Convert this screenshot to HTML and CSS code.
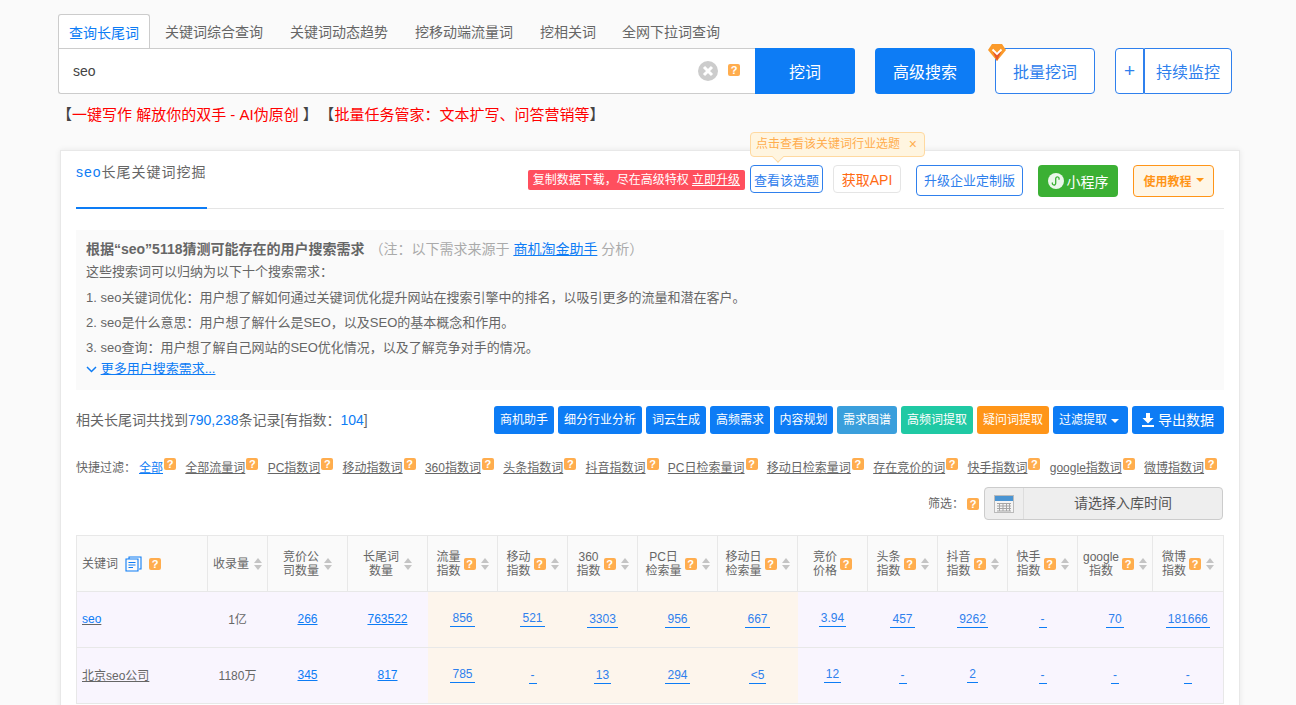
FILE: index.html
```html
<!DOCTYPE html>
<html lang="zh-CN">
<head>
    <meta charset="UTF-8">
    <meta name="viewport" content="width=device-width, initial-scale=1.0">
    <title>seo长尾关键词挖掘</title>
    <link rel="stylesheet" href="styles.css">
</head>
<body>
    <div class="search-area">
        <div class="tabs">
            <a class="tab active">查询长尾词</a>
            <a class="tab">关键词综合查询</a>
            <a class="tab">关键词动态趋势</a>
            <a class="tab">挖移动端流量词</a>
            <a class="tab">挖相关词</a>
            <a class="tab">全网下拉词查询</a>
        </div>
        <div class="search-row">
            <div class="search-box">
                <span class="search-text">seo</span>
                <svg class="clear-icon" width="20" height="20" viewBox="0 0 20 20"><circle cx="10" cy="10" r="10" fill="#ccc"/><path d="M6 6l8 8M14 6l-8 8" stroke="#fff" stroke-width="3"/></svg>
                <i class="q">?</i>
            </div>
            <button class="btn-main">挖词</button>
            <button class="btn-main btn-adv">高级搜索</button>
            <div class="batch-wrap">
                <svg class="diamond" width="18" height="18" viewBox="0 0 18 18"><path d="M4 1h10l4 6-9 11L0 7z" fill="#fb9a2a"/><path d="M9 18L5 9h8z" fill="#e8562a"/><path d="M4.500 6.500L9 11l4.500-4.500" fill="none" stroke="#fff" stroke-width="1.800"/></svg>
                <button class="btn-line">批量挖词</button>
            </div>
            <div class="monitor">
                <button class="btn-line plus">+</button>
                <button class="btn-line watch">持续监控</button>
            </div>
        </div>
        <div class="promo">【<span>一键写作 解放你的双手 - AI伪原创</span> 】<b class="promo-next">【<span>批量任务管家&#65306;文本扩写、问答营销等</span>】</b></div>
    </div>

    <div class="card">
        <div class="card-head">
            <div class="card-title"><b>seo</b>长尾关键词挖掘</div>
            <div class="actions">
                <span class="red-tag">复制数据下载&#65292;尽在高级特权 <u>立即升级</u></span>
                <div class="topic-wrap">
                    <div class="tip">点击查看该关键词行业选题<em>×</em></div>
                    <a class="act act-topic">查看该选题</a>
                </div>
                <a class="act act-api">获取API</a>
                <a class="act act-custom">升级企业定制版</a>
                <a class="act act-mini">
                    <svg width="16" height="16" viewBox="0 0 16 16"><circle cx="8" cy="8" r="8" fill="#fff" opacity=".9"/><path d="M4.500 9.500a1.700 1.700 0 1 0 3.200 .8V5.700a1.700 1.700 0 1 1 3 1" fill="none" stroke="#3bb034" stroke-width="1.300"/></svg>
                    小程序
                </a>
                <a class="act act-help">使用教程<i class="caret"></i></a>
            </div>
        </div>

        <div class="needs">
            <p class="needs-head"><b>根据“seo”5118猜测可能存在的用户搜索需求</b><span class="note">&#65288;注&#65306;以下需求来源于 <a>商机淘金助手</a> 分析&#65289;</span></p>
            <p class="needs-sub">这些搜索词可以归纳为以下十个搜索需求&#65306;</p>
            <p>1. seo关键词优化&#65306;用户想了解如何通过关键词优化提升网站在搜索引擎中的排名&#65292;以吸引更多的流量和潜在客户。</p>
            <p>2. seo是什么意思&#65306;用户想了解什么是SEO&#65292;以及SEO的基本概念和作用。</p>
            <p>3. seo查询&#65306;用户想了解自己网站的SEO优化情况&#65292;以及了解竞争对手的情况。</p>
            <p class="needs-more">
                <svg width="11" height="7" viewBox="0 0 11 7"><path d="M1 1l4.500 4.500L10 1" fill="none" stroke="#0d7cf5" stroke-width="1.500"/></svg>
                <a>更多用户搜索需求...</a>
            </p>
        </div>

        <div class="stat-row">
            <div class="stat">相关长尾词共找到<span>790,238</span>条记录[有指数&#65306;<span>104</span>]</div>
            <div class="tools">
                <a class="tool">商机助手</a>
                <a class="tool">细分行业分析</a>
                <a class="tool">词云生成</a>
                <a class="tool">高频需求</a>
                <a class="tool tool-plan">内容规划</a>
                <a class="tool tool-sky">需求图谱</a>
                <a class="tool tool-green">高频词提取</a>
                <a class="tool tool-orange">疑问词提取</a>
                <a class="tool tool-filter">过滤提取<i class="caret"></i></a>
                <a class="tool tool-export">
                    <svg width="14" height="14" viewBox="0 0 14 14"><path d="M5 0h4v5h3.500L7 10.500 1.500 5H5zM1 12h12v2H1z" fill="#fff"/></svg>
                    导出数据
                </a>
            </div>
        </div>

        <div class="quick">
            <span class="quick-label">快捷过滤&#65306;</span>
            <a class="on">全部</a><i class="q">?</i>
            <a>全部流量词</a><i class="q">?</i>
            <a>PC指数词</a><i class="q">?</i>
            <a>移动指数词</a><i class="q">?</i>
            <a>360指数词</a><i class="q">?</i>
            <a>头条指数词</a><i class="q">?</i>
            <a>抖音指数词</a><i class="q">?</i>
            <a>PC日检索量词</a><i class="q">?</i>
            <a>移动日检索量词</a><i class="q">?</i>
            <a>存在竞价的词</a><i class="q">?</i>
            <a>快手指数词</a><i class="q">?</i>
            <a>google指数词</a><i class="q">?</i>
            <a>微博指数词</a><i class="q">?</i>
        </div>

        <div class="date-row">
            <span class="date-label">筛选&#65306;</span>
            <i class="q">?</i>
            <div class="date-box">
                <div class="date-icon">
                    <svg width="20" height="18" viewBox="0 0 20 18"><rect x=".5" y=".5" width="19" height="17" fill="#f4f4f4" stroke="#bbb"/><rect x="1" y="1" width="18" height="5" fill="#4a94d2"/><path d="M3 8.500h14M3 11h14M3 13.500h14M3 16h14M5.500 8v8M9 8v8M12.500 8v8M15.500 8v8" stroke="#a5a5a5"/></svg>
                </div>
                <div class="date-text">请选择入库时间</div>
            </div>
        </div>

        <table class="words">
            <colgroup>
                <col class="c131"><col class="c60"><col class="c80"><col class="c80"><col class="c70"><col class="c70"><col class="c70"><col class="c80"><col class="c80"><col class="c70"><col class="c70"><col class="c70"><col class="c70"><col class="c75"><col class="c71">
            </colgroup>
            <thead>
                <tr>
                    <th class="th-key">
                        <div class="th-left">关键词
                            <svg class="doc" width="17" height="16" viewBox="0 0 17 16"><path d="M4 2.500V1h12v12h-2M1 3h12v12H1zM3.500 6.500h7M3.500 9h7M3.500 11.500h4.500" fill="none" stroke="#0d7cf5" stroke-width="1.100"/></svg>
                            <i class="q">?</i>
                        </div>
                    </th>
                    <th><div class="th">收录量<i class="sort"></i></div></th>
                    <th><div class="th">竞价公<br>司数量<i class="sort"></i></div></th>
                    <th><div class="th"><span class="mid">长尾词<br>数量</span><i class="sort"></i></div></th>
                    <th><div class="th">流量<br>指数<i class="q">?</i><i class="sort"></i></div></th>
                    <th><div class="th">移动<br>指数<i class="q">?</i><i class="sort"></i></div></th>
                    <th><div class="th"><span class="mid">360<br>指数</span><i class="q">?</i><i class="sort"></i></div></th>
                    <th><div class="th"><span class="mid">PC日<br>检索量</span><i class="q">?</i><i class="sort"></i></div></th>
                    <th><div class="th">移动日<br>检索量<i class="q">?</i><i class="sort"></i></div></th>
                    <th><div class="th">竞价<br>价格<i class="q">?</i></div></th>
                    <th><div class="th">头条<br>指数<i class="q">?</i><i class="sort"></i></div></th>
                    <th><div class="th">抖音<br>指数<i class="q">?</i><i class="sort"></i></div></th>
                    <th><div class="th">快手<br>指数<i class="q">?</i><i class="sort"></i></div></th>
                    <th><div class="th"><span class="mid">google<br>指数</span><i class="q">?</i><i class="sort"></i></div></th>
                    <th><div class="th">微博<br>指数<i class="q">?</i><i class="sort"></i></div></th>
                </tr>
            </thead>
            <tbody>
                <tr>
                    <td class="key"><a class="word blue">seo</a></td>
                    <td>1亿</td>
                    <td><a class="lnk">266</a></td>
                    <td><a class="lnk">763522</a></td>
                    <td class="warm"><a class="idx up">856</a></td>
                    <td class="warm"><a class="idx up">521</a></td>
                    <td class="warm"><a class="idx">3303</a></td>
                    <td class="warm"><a class="idx">956</a></td>
                    <td class="warm"><a class="idx">667</a></td>
                    <td><a class="idx up">3.94</a></td>
                    <td><a class="idx">457</a></td>
                    <td><a class="idx">9262</a></td>
                    <td><a class="idx">-</a></td>
                    <td><a class="idx">70</a></td>
                    <td><a class="idx">181666</a></td>
                </tr>
                <tr>
                    <td class="key"><a class="word">北京seo公司</a></td>
                    <td>1180万</td>
                    <td><a class="lnk">345</a></td>
                    <td><a class="lnk">817</a></td>
                    <td class="warm"><a class="idx up">785</a></td>
                    <td class="warm"><a class="idx">-</a></td>
                    <td class="warm"><a class="idx">13</a></td>
                    <td class="warm"><a class="idx">294</a></td>
                    <td class="warm"><a class="idx">&lt;5</a></td>
                    <td><a class="idx up">12</a></td>
                    <td><a class="idx">-</a></td>
                    <td><a class="idx up">2</a></td>
                    <td><a class="idx">-</a></td>
                    <td><a class="idx">-</a></td>
                    <td><a class="idx">-</a></td>
                </tr>
            </tbody>
        </table>
    </div>
</body>
</html>
```

FILE: styles.css
```css
* {
    margin: 0;
    padding: 0;
    box-sizing: border-box;
}

html, body {
    height: 705px;
    overflow: hidden;
}

body {
    font-family: "Liberation Sans", "Noto Sans CJK SC", sans-serif;
    font-size: 12px;
    color: #666;
    background-color: #fafafa;
}

i, em {
    font-style: normal;
}

button {
    font-family: inherit;
    cursor: pointer;
}

.q {
    display: inline-block;
    flex: none;
    width: 12px;
    height: 12px;
    border-radius: 2px;
    background-color: #ffad4e;
    color: #fff;
    font-size: 11px;
    font-weight: bold;
    line-height: 12px;
    text-align: center;
}

.caret {
    display: inline-block;
    margin-left: 4px;
    border-top: 4px solid currentColor;
    border-left: 4px solid transparent;
    border-right: 4px solid transparent;
    vertical-align: middle;
}

/* search */
.search-area {
    padding: 14px 0 0 58px;
}

.tabs {
    display: flex;
    width: 697px;
    height: 35px;
    border-bottom: 1px solid #ccc;
}

.tab {
    height: 34px;
    margin-left: 1px;
    padding: 0 13px;
    font-size: 14px;
    line-height: 36px;
    color: #666;
}

.tab.active {
    height: 35px;
    width: 92px;
    margin: 0 1px 0 0;
    padding: 0 10px;
    border: 1px solid #ccc;
    border-bottom: none;
    border-radius: 3px 3px 0 0;
    background-color: #fff;
    color: #0d7cf5;
}

.tab:last-child {
    margin-left: 0;
}

.search-row {
    display: flex;
    height: 46px;
    margin-top: -1px;
}

.search-box {
    display: flex;
    align-items: center;
    width: 697px;
    padding: 0 15px 0 14px;
    border: 1px solid #ccc;
    border-right: none;
    border-radius: 0 0 0 3px;
    background-color: #fff;
}

.search-text {
    flex: 1;
    font-size: 14px;
    color: #444;
}

.clear-icon {
    margin-right: 10px;
}

.search-box .q {
    margin-bottom: 3px;
}

.btn-main {
    width: 100px;
    border: none;
    border-radius: 0 3px 3px 0;
    background-color: #0d7cf5;
    color: #fff;
    font-size: 16px;
}

.btn-adv {
    margin-left: 20px;
    border-radius: 4px;
}

.batch-wrap {
    position: relative;
    margin-left: 20px;
}

.diamond {
    position: absolute;
    left: -7px;
    top: -5px;
}

.btn-line {
    height: 46px;
    width: 100px;
    border: 1px solid #2f80ed;
    border-radius: 4px;
    background-color: #fff;
    color: #2f80ed;
    font-size: 16px;
}

.monitor {
    display: flex;
    margin-left: 20px;
}

.plus {
    width: 29px;
    border-radius: 4px 0 0 4px;
    font-size: 19px;
}

.watch {
    width: 88px;
    border-radius: 0 4px 4px 0;
}

.promo {
    margin: 11px 0 0 -1px;
    font-size: 15px;
    line-height: 20px;
    color: #444;
    white-space: pre;
}

.promo span {
    color: #f00;
}

.promo-next {
    margin-left: 9px;
    font-weight: normal;
}

/* card */
.card {
    width: 1180px;
    height: 600px;
    margin: 25px 0 0 60px;
    padding: 0 15px;
    border: 1px solid #e8e8e8;
    background-color: #fff;
    box-shadow: 0 0 6px rgba(0,0,0,0.08);
}

.card-head {
    display: flex;
    justify-content: space-between;
    height: 58px;
    border-bottom: 1px solid #e5e5e5;
}

.card-title {
    width: 131px;
    height: 58px;
    padding-top: 12px;
    border-bottom: 2px solid #0d7cf5;
    font-size: 14px;
    line-height: 18px;
    letter-spacing: 1px;
    white-space: nowrap;
}

.card-title b {
    font-weight: normal;
    color: #0d7cf5;
}

.actions {
    display: flex;
    align-items: flex-start;
    padding: 14px 10px 0 0;
}

.red-tag {
    height: 20px;
    margin-top: 5px;
    padding: 0 5px;
    border-radius: 2px;
    background-color: #ff4f5e;
    color: #fff;
    font-size: 12px;
    line-height: 20px;
    white-space: nowrap;
}

.topic-wrap {
    position: relative;
    margin-left: 5px;
}

.tip {
    position: absolute;
    left: 0;
    top: -33px;
    display: flex;
    justify-content: space-between;
    width: 175px;
    height: 25px;
    padding: 0 7px 0 5px;
    border: 1px solid #ffd9a0;
    border-radius: 4px;
    background-color: #fff5e0;
    color: #ffad4e;
    font-size: 12px;
    line-height: 23px;
    white-space: nowrap;
}

.tip em {
    font-size: 14px;
}

.tip::after {
    content: "";
    position: absolute;
    left: 22px;
    bottom: -6px;
    width: 9px;
    height: 9px;
    border-right: 1px solid #ffd9a0;
    border-bottom: 1px solid #ffd9a0;
    background-color: #fff5e0;
    transform: rotate(45deg) scale(.8);
}

.act {
    display: flex;
    align-items: center;
    justify-content: center;
    height: 28px;
    font-size: 13px;
    border-radius: 4px;
    white-space: nowrap;
}

.act-topic {
    width: 73px;
    border: 1px solid #2f80ed;
    color: #2f80ed;
}

.act-api {
    width: 68px;
    margin-left: 10px;
    border: 1px solid #e5e5e5;
    color: #ff6a13;
    font-size: 14px;
}

.act-custom {
    width: 107px;
    height: 31px;
    margin-left: 15px;
    padding-bottom: 2px;
    border: 1px solid #2f80ed;
    color: #2f80ed;
}

.act-mini {
    gap: 3px;
    width: 80px;
    height: 32px;
    margin-left: 15px;
    padding-bottom: 1px;
    background-color: #3bb034;
    color: #fff;
    font-size: 14px;
}

.act-help {
    width: 81px;
    height: 32px;
    margin-left: 15px;
    padding-bottom: 2px;
    border: 1px solid #ff9518;
    background-color: #fff6e6;
    color: #ff9518;
    font-size: 12px;
    font-weight: bold;
}

/* needs */
.needs {
    height: 160px;
    margin-top: 21px;
    padding: 8px 10px 0;
    background-color: #fafafa;
    font-size: 13px;
    line-height: 25px;
}

.needs-head {
    font-size: 14px;
    line-height: 23px;
}

.needs-sub {
    height: 24px;
    line-height: 22px;
}

.needs-head b {
    margin-right: 5px;
    color: #666;
}

.note {
    color: #aaa;
}

.needs a {
    color: #0d7cf5;
    text-decoration: underline;
}

.needs-more {
    line-height: 18px;
}

/* results */
.stat-row {
    display: flex;
    justify-content: space-between;
    align-items: center;
    height: 28px;
    margin-top: 16px;
}

.stat {
    padding-bottom: 3px;
    font-size: 14px;
    white-space: nowrap;
}

.stat span {
    color: #0d7cf5;
}

.tools {
    display: flex;
    gap: 4px;
}

.tool {
    height: 28px;
    padding: 0 6px;
    border-radius: 3px;
    background-color: #0d7cf5;
    color: #fff;
    line-height: 28px;
    white-space: nowrap;
}

.tool-plan {
    padding: 0 5.500px;
}

.tool-sky {
    background-color: #3a9fdc;
}

.tool-green {
    background-color: #20c9a4;
}

.tool-orange {
    background-color: #ff9518;
}

.tool-filter {
    width: 75px;
}

.tool-export {
    display: flex;
    align-items: center;
    gap: 3px;
    width: 92px;
    padding: 0 9px;
    font-size: 14px;
}

.quick {
    display: flex;
    align-items: center;
    height: 20px;
    margin-top: 22px;
    white-space: nowrap;
}

.quick-label {
    flex: none;
    width: 63px;
}

.quick a {
    color: #666;
    text-decoration: underline;
}

.quick a.on {
    color: #0d7cf5;
}

.quick .q {
    margin: 0 9.300px 4px 1px;
}

.date-row {
    display: flex;
    justify-content: flex-end;
    align-items: center;
    height: 33px;
    margin-top: 11px;
    padding-right: 1px;
}

.date-label {
    padding-bottom: 3px;
}

.date-row .q {
    margin: 0 5px 0 3px;
}

.date-box {
    display: flex;
    width: 239px;
    height: 33px;
    border: 1px solid #ccc;
    border-radius: 4px;
    background-color: #eee;
}

.date-icon {
    display: flex;
    align-items: center;
    justify-content: center;
    width: 39px;
    border-right: 1px solid #ddd;
}

.date-text {
    flex: 1;
    font-size: 14px;
    line-height: 31px;
    text-align: center;
    color: #555;
}

/* table */
.words {
    width: 1148px;
    margin-top: 15px;
    table-layout: fixed;
    border-collapse: collapse;
    background-color: #f9f5fe;
}

.c131 { width: 131px; }
.c60 { width: 60px; }
.c80 { width: 80px; }
.c70 { width: 70px; }
.c71 { width: 71px; }
.c75 { width: 75px; }

.words th {
    height: 56px;
    border: 1px solid #e8e8e8;
    background-color: #fafafa;
    font-weight: normal;
    line-height: 14px;
}

.th {
    display: flex;
    align-items: center;
    justify-content: center;
    text-align: left;
    white-space: nowrap;
}

.th-left {
    display: flex;
    align-items: center;
    padding-left: 5px;
}

.mid {
    text-align: center;
}

.doc {
    margin: 0 7px;
}

.th .q {
    margin-left: 3px;
}

.sort {
    flex: none;
    position: relative;
    width: 8px;
    height: 12px;
    margin-left: 5px;
}

.sort::before,
.sort::after {
    content: "";
    position: absolute;
    left: 0;
    border-left: 4px solid transparent;
    border-right: 4px solid transparent;
}

.sort::before {
    top: 0;
    border-bottom: 5px solid #c4c4c4;
}

.sort::after {
    bottom: 0;
    border-top: 5px solid #c4c4c4;
}

.words td {
    height: 56px;
    border-top: 1px solid #e8e8e8;
    border-bottom: 1px solid #e8e8e8;
    text-align: center;
}

.words td:nth-child(-n+4) {
    padding-bottom: 2px;
}

.words td:first-child {
    border-left: 1px solid #e8e8e8;
}

.words td:last-child {
    border-right: 1px solid #e8e8e8;
}

.words td.key {
    padding-left: 5px;
    text-align: left;
}

.words td.warm {
    background-color: #fdf5ec;
}

.word {
    text-decoration: underline;
    color: #666;
}

.word.blue {
    color: #0d7cf5;
    text-decoration-color: #666;
}

.lnk {
    color: #0d7cf5;
    text-decoration: underline;
}

.idx {
    display: inline-block;
    padding: 0 2px 1px;
    border-bottom: 1px solid #0d7cf5;
    color: #2f80ed;
}

.idx.up {
    margin-bottom: 2px;
}
```
